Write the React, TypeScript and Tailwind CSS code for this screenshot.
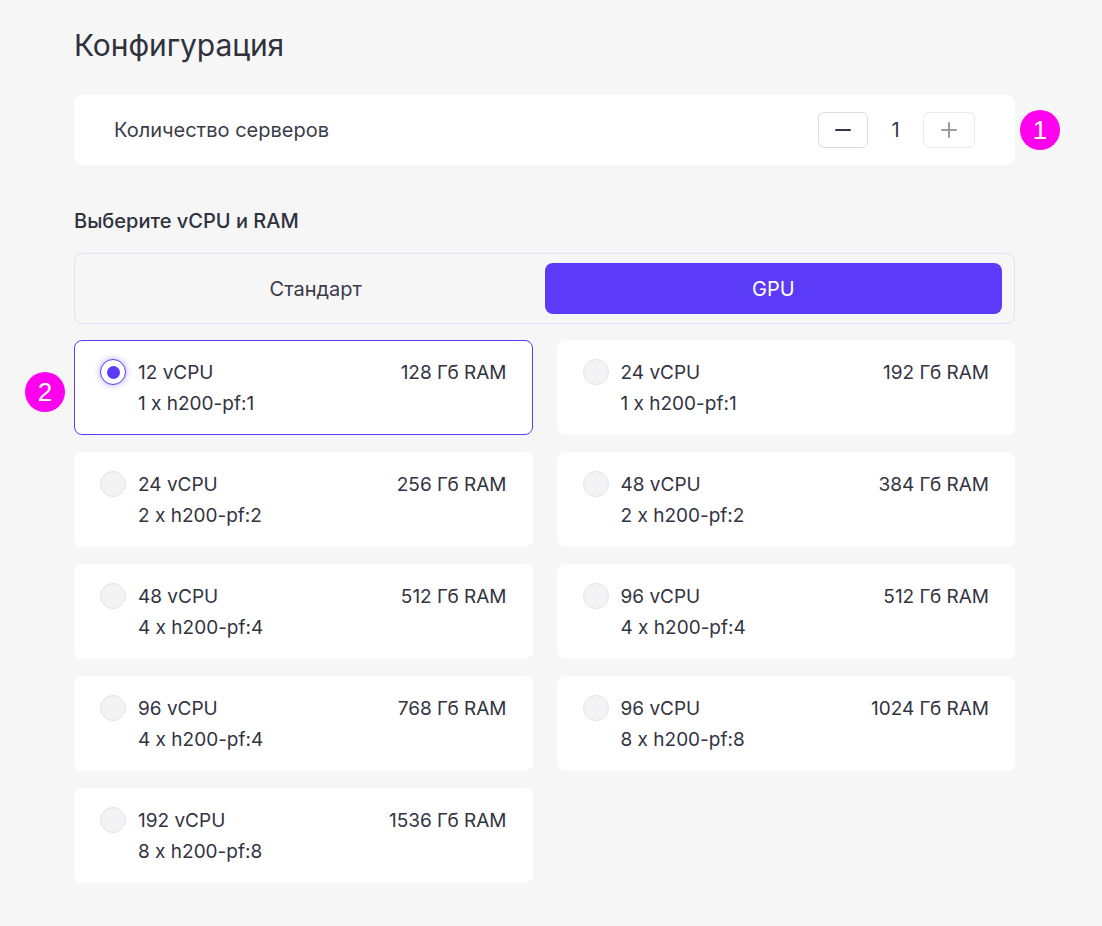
import React, { useState } from 'react';

type Plan = { cpu: string; ram: string; gpu: string };

const plans: Plan[] = [
  { cpu: '12 vCPU', ram: '128 Гб RAM', gpu: '1 x h200-pf:1' },
  { cpu: '24 vCPU', ram: '192 Гб RAM', gpu: '1 x h200-pf:1' },
  { cpu: '24 vCPU', ram: '256 Гб RAM', gpu: '2 x h200-pf:2' },
  { cpu: '48 vCPU', ram: '384 Гб RAM', gpu: '2 x h200-pf:2' },
  { cpu: '48 vCPU', ram: '512 Гб RAM', gpu: '4 x h200-pf:4' },
  { cpu: '96 vCPU', ram: '512 Гб RAM', gpu: '4 x h200-pf:4' },
  { cpu: '96 vCPU', ram: '768 Гб RAM', gpu: '4 x h200-pf:4' },
  { cpu: '96 vCPU', ram: '1024 Гб RAM', gpu: '8 x h200-pf:8' },
  { cpu: '192 vCPU', ram: '1536 Гб RAM', gpu: '8 x h200-pf:8' },
];

const Badge: React.FC<{ n: number }> = ({ n }) => (
  <div className="w-10 h-10 rounded-full bg-[#ff00ee] text-white flex items-center justify-center text-[26px] leading-none font-['Liberation_Sans',sans-serif]">
    {n}
  </div>
);

const App: React.FC = () => {
  const [count, setCount] = useState(1);
  const [tab, setTab] = useState<'std' | 'gpu'>('gpu');
  const [selected, setSelected] = useState(0);

  return (
    <div className="min-h-[926px] bg-[#f6f6f7] font-['Inter',sans-serif] text-[#32343f]">
      <div className="w-[941px] ml-[74px] pt-[25px]">
        <h1 className="text-[30px] leading-[40px] font-normal text-[#2f313d] tracking-[-0.1px]">Конфигурация</h1>

        {/* servers count */}
        <div className="relative mt-[30px] h-[70px] bg-white rounded-lg flex items-center justify-between pl-10 pr-10">
          <span className="text-[20px] text-[#3a3c48]">Количество серверов</span>
          <div className="flex items-center">
            <button
              onClick={() => setCount(Math.max(1, count - 1))}
              className="w-[50px] h-[36px] rounded-md border border-[#dcdce6] bg-white flex items-center justify-center"
            >
              <svg width="18" height="18" viewBox="0 0 18 18">
                <path d="M2 9h14" stroke="#33354a" strokeWidth="2" strokeLinecap="round" />
              </svg>
            </button>
            <span className="w-[55px] text-center text-[20px]">{count}</span>
            <button
              onClick={() => setCount(count + 1)}
              className="w-[52px] h-[36px] rounded-md border border-[#e8e8ee] bg-white flex items-center justify-center"
            >
              <svg width="18" height="18" viewBox="0 0 18 18">
                <path d="M2 9h14M9 2v14" stroke="#9a9ba3" strokeWidth="2" strokeLinecap="round" />
              </svg>
            </button>
          </div>
          <div className="absolute right-[-45px] top-[15px]">
            <Badge n={1} />
          </div>
        </div>

        <h2 className="mt-[42px] text-[20px] leading-[28px] font-medium text-[#2f313d]">Выберите vCPU и RAM</h2>

        {/* tabs */}
        <div className="mt-[18px] h-[71px] rounded-lg border border-[#e2e2ea] px-3 py-[9px] grid grid-cols-2">
          <button
            onClick={() => setTab('std')}
            className={`rounded-lg text-[20px] ${tab === 'std' ? 'bg-[#5b3bf7] text-white' : 'text-[#3a3c48]'}`}
          >
            Стандарт
          </button>
          <button
            onClick={() => setTab('gpu')}
            className={`rounded-lg text-[20px] ${tab === 'gpu' ? 'bg-[#5b3bf7] text-white' : 'text-[#3a3c48]'}`}
          >
            GPU
          </button>
        </div>

        {/* plans */}
        <div className="mt-4 grid grid-cols-2 gap-x-6 gap-y-[17px]">
          {plans.map((p, i) => {
            const active = i === selected;
            return (
              <div
                key={i}
                onClick={() => setSelected(i)}
                className={`relative h-[95px] bg-white rounded-lg px-[25px] pt-[16px] pb-[14px] flex cursor-pointer border ${
                  active ? 'border-[#5b3bf7]' : 'border-white'
                }`}
              >
                {i === 0 && (
                  <div className="absolute left-[-50px] top-[31px]">
                    <Badge n={2} />
                  </div>
                )}
                <div className="pt-[2px]">
                  {active ? (
                    <div className="w-[26px] h-[26px] rounded-full bg-white border border-[#5b3bf7] flex items-center justify-center shadow-[0_0_6px_rgba(91,59,247,0.45)]">
                      <div className="w-[13px] h-[13px] rounded-full bg-[#5b3bf7]" />
                    </div>
                  ) : (
                    <div className="w-[26px] h-[26px] rounded-full bg-[#f3f3f6] border border-[#e3e3eb]" />
                  )}
                </div>
                <div className="ml-[12px] flex-1 text-[19px] leading-[31px] text-[#32343f]">
                  <div className="flex justify-between">
                    <span>{p.cpu}</span>
                    <span>{p.ram}</span>
                  </div>
                  <div>{p.gpu}</div>
                </div>
              </div>
            );
          })}
        </div>
      </div>
    </div>
  );
};

export default App;
